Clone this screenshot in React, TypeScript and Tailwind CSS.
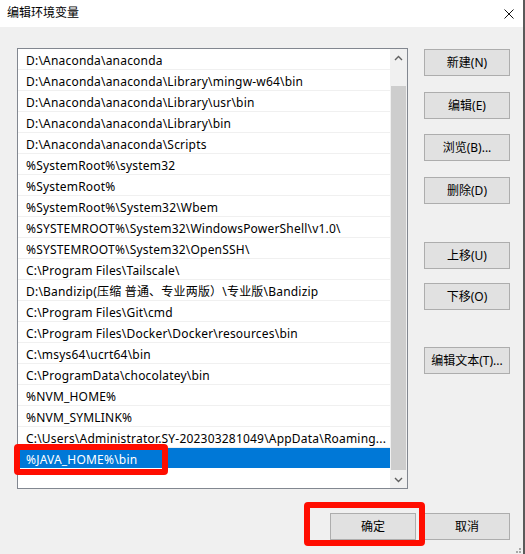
import clsx from "clsx";

const paths = [
  "D:\\Anaconda\\anaconda",
  "D:\\Anaconda\\anaconda\\Library\\mingw-w64\\bin",
  "D:\\Anaconda\\anaconda\\Library\\usr\\bin",
  "D:\\Anaconda\\anaconda\\Library\\bin",
  "D:\\Anaconda\\anaconda\\Scripts",
  "%SystemRoot%\\system32",
  "%SystemRoot%",
  "%SystemRoot%\\System32\\Wbem",
  "%SYSTEMROOT%\\System32\\WindowsPowerShell\\v1.0\\",
  "%SYSTEMROOT%\\System32\\OpenSSH\\",
  "C:\\Program Files\\Tailscale\\",
  "D:\\Bandizip(压缩 普通、专业两版）\\专业版\\Bandizip",
  "C:\\Program Files\\Git\\cmd",
  "C:\\Program Files\\Docker\\Docker\\resources\\bin",
  "C:\\msys64\\ucrt64\\bin",
  "C:\\ProgramData\\chocolatey\\bin",
  "%NVM_HOME%",
  "%NVM_SYMLINK%",
  "C:\\Users\\Administrator.SY-202303281049\\AppData\\Roaming...",
  "%JAVA_HOME%\\bin",
];

const selected = paths.length - 1;

const font = "font-['Noto_Sans','Noto_Sans_CJK_SC',sans-serif]";

function Button({ label, className }: { label: string; className?: string }) {
  return (
    <button
      type="button"
      className={clsx(
        "w-[86px] h-[27px] flex items-center justify-center",
        "bg-[#e1e1e1] border border-[#adadad] text-[12px] text-black",
        className
      )}
    >
      {label}
    </button>
  );
}

function Chevron({ down }: { down?: boolean }) {
  return (
    <svg width="9" height="6" viewBox="0 0 9 6" className={clsx(down && "rotate-180")}>
      <path d="M1 5 L4.5 1.5 L8 5" fill="none" stroke="#606060" strokeWidth="1.4" />
    </svg>
  );
}

export default function App() {
  return (
    <div
      className={clsx(
        "relative w-[525px] h-[554px] flex flex-col overflow-hidden",
        "border-r-2 border-[#5a5a5a] bg-[#f0f0f0]",
        font
      )}
    >
      <header className="h-[27px] bg-white flex items-center justify-between pl-[7px] pr-[9px]">
        <span className="text-[12px] text-black leading-none -mt-[1px]">编辑环境变量</span>
        <svg width="10" height="10" viewBox="0 0 10 10">
          <path d="M0.5 0.5 L9.5 9.5 M9.5 0.5 L0.5 9.5" stroke="#111" strokeWidth="1" />
        </svg>
      </header>

      <main className="flex-1 flex flex-col pt-[21px] pl-[17px] pr-[13px]">
        <div className="flex">
          <div className="w-[391px] h-[441px] border border-[#828790] bg-white flex">
            <ul className="flex-1 flex flex-col overflow-hidden">
              {paths.map((path, i) => (
                <li
                  key={path}
                  className={clsx(
                    "h-[21px] shrink-0 pl-[8px] text-[12px] leading-[24px] tracking-[0.2px] whitespace-nowrap overflow-hidden border-b border-[#f0f0f0]",
                    i === selected ? "bg-[#0078d7] text-white border-white" : "text-black"
                  )}
                >
                  {path}
                </li>
              ))}
            </ul>
            <div className="w-[17px] flex flex-col bg-[#f0f0f0]">
              <div className="h-[17px] flex items-center justify-center">
                <Chevron />
              </div>
              <div className="flex-1 pt-[20px] pb-[1px]">
                <div className="mx-[1px] h-[384px] bg-[#cdcdcd]" />
              </div>
              <div className="h-[17px] flex items-center justify-center">
                <Chevron down />
              </div>
            </div>
          </div>

          <div className="ml-[16px] flex flex-col">
            <Button label="新建(N)" className="mt-[1px]" />
            <Button label="编辑(E)" className="mt-[16px]" />
            <Button label="浏览(B)..." className="mt-[15px]" />
            <Button label="删除(D)" className="mt-[16px]" />
            <Button label="上移(U)" className="mt-[38px]" />
            <Button label="下移(O)" className="mt-[14px]" />
            <Button label="编辑文本(T)..." className="mt-[37px]" />
          </div>
        </div>

        <div className="mt-[24px] flex justify-end gap-[8px]">
          <Button label="确定" />
          <Button label="取消" />
        </div>
      </main>

      {/* size grip */}
      <div className="absolute left-[516px] top-[551px] w-[2px] h-[2px] bg-[#a8a8a8]" />
      <div className="absolute left-[519px] top-[551px] w-[2px] h-[2px] bg-[#a8a8a8]" />
      <div className="absolute left-[519px] top-[548px] w-[2px] h-[2px] bg-[#a8a8a8]" />

      {/* highlight frames */}
      <div className="absolute left-[14px] top-[444px] w-[154px] h-[31px] border-[6px] border-[#ff0d00] rounded-[4px]" />
      <div className="absolute left-[304px] top-[502px] w-[121px] h-[44px] border-[6px] border-[#ff0d00] rounded-[4px]" />
    </div>
  );
}
